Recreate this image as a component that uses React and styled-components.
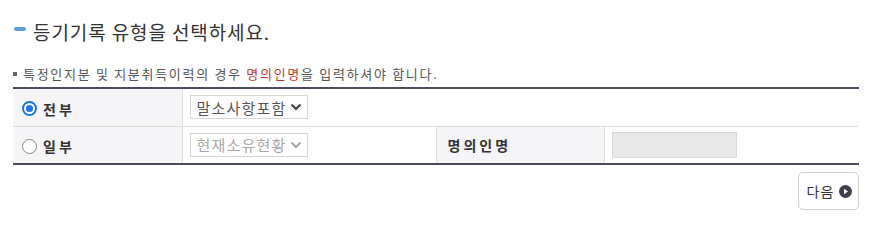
import React from "react";
import styled, { createGlobalStyle } from "styled-components";

const GlobalStyle = createGlobalStyle`
  html, body {
    margin: 0;
    padding: 0;
    background: #fff;
  }
  body {
    font-family: "Noto Sans CJK KR", "Noto Sans", sans-serif;
    color: #333;
  }
`;

const Page = styled.div`
  width: 869px;
  box-sizing: border-box;
  padding: 17px 10px 0 13px;
`;

const Title = styled.h2`
  display: flex;
  align-items: center;
  margin: 0;
  font-size: 19px;
  font-weight: 400;
  letter-spacing: 0.9px;
  line-height: 30px;
  color: #333;
  &::before {
    content: "";
    width: 12px;
    height: 4px;
    border-radius: 2px;
    background: #5b9fd8;
    margin: 0 7px 7px 1px;
  }
`;

const Note = styled.p`
  display: flex;
  align-items: center;
  margin: 18px 0 4px;
  font-size: 13px;
  letter-spacing: 1.7px;
  line-height: 18px;
  color: #555;
  &::before {
    content: "";
    width: 4px;
    height: 4px;
    background: #666;
    margin-right: 6px;
  }
`;

const Em = styled.span`
  color: #c0392b;
`;

const Table = styled.table`
  width: 846px;
  border-collapse: collapse;
  table-layout: fixed;
  border-top: 2px solid #4b4b5c;
  border-bottom: 2px solid #4b4b5c;
`;

const Row = styled.tr`
  height: ${(p) => p.$h}px;
  & + & td,
  & + & th {
    border-top: 1px solid #dcdcdc;
  }
`;

const Head = styled.th`
  background: #f5f5f8;
  text-align: left;
  font-weight: 700;
  font-size: 14px;
  letter-spacing: 3px;
  color: #333;
  padding: 0 0 0 ${(p) => p.$pad || 9}px;
  border-right: 1px solid #dcdcdc;
  border-left: ${(p) => (p.$divider ? "1px solid #dcdcdc" : "none")};
`;

const Cell = styled.td`
  padding: 0 0 0 7px;
`;

const RadioLabel = styled.label`
  display: inline-flex;
  align-items: center;
  gap: 6px;
  cursor: pointer;
`;

const Radio = styled.span`
  width: 15px;
  height: 15px;
  box-sizing: border-box;
  border-radius: 50%;
  border: ${(p) => (p.$on ? "2px solid #1a73e8" : "1.5px solid #858585")};
  background: #fff;
  display: inline-flex;
  align-items: center;
  justify-content: center;
  &::after {
    content: "";
    width: 7px;
    height: 7px;
    border-radius: 50%;
    background: ${(p) => (p.$on ? "#1a73e8" : "transparent")};
  }
`;

const Select = styled.div`
  width: 118px;
  height: 24px;
  box-sizing: border-box;
  border: 1px solid #d6d6d6;
  background: #fff;
  display: flex;
  align-items: center;
  justify-content: space-between;
  padding: 0 5px 0 6px;
  font-size: 15px;
  letter-spacing: 1.2px;
  color: ${(p) => (p.$disabled ? "#a8a8a8" : "#555")};
  svg {
    stroke: ${(p) => (p.$disabled ? "#a8a8a8" : "#444")};
    flex-shrink: 0;
  }
`;

const Input = styled.div`
  width: 125px;
  height: 26px;
  box-sizing: border-box;
  border: 1px solid #d8d8d8;
  background: #e8e8e8;
`;

const Footer = styled.div`
  display: flex;
  justify-content: flex-end;
  padding-top: 7px;
`;

const NextButton = styled.button`
  height: 38px;
  width: 61px;
  box-sizing: border-box;
  border: 1px solid #cfcfcf;
  border-radius: 5px;
  background: #fff;
  display: flex;
  align-items: center;
  justify-content: center;
  gap: 5px;
  font-family: inherit;
  font-size: 14px;
  letter-spacing: 1px;
  color: #333;
  padding: 0 0 0 2px;
`;

const Chevron = () => (
  <svg width="12" height="8" viewBox="0 0 12 8" fill="none" strokeWidth="2.2">
    <path d="M1.5 1.5 L6 6 L10.5 1.5" />
  </svg>
);

const ArrowCircle = () => (
  <svg width="13" height="13" viewBox="0 0 13 13">
    <circle cx="6.5" cy="6.5" r="6.5" fill="#3f3f4a" />
    <path d="M5 3.8 L9 6.5 L5 9.2 Z" fill="#fff" />
  </svg>
);

export default function App() {
  return (
    <>
      <GlobalStyle />
      <Page>
        <Title>등기기록 유형을 선택하세요.</Title>
        <Note>
          특정인지분 및 지분취득이력의 경우&nbsp;<Em>명의인명</Em>을 입력하셔야 합니다.
        </Note>
        <Table>
          <colgroup>
            <col style={{ width: 169 }} />
            <col style={{ width: 254 }} />
            <col style={{ width: 168 }} />
            <col style={{ width: 255 }} />
          </colgroup>
          <tbody>
            <Row $h={38}>
              <Head>
                <RadioLabel>
                  <Radio $on />
                  전부
                </RadioLabel>
              </Head>
              <Cell colSpan={3}>
                <Select>
                  말소사항포함
                  <Chevron />
                </Select>
              </Cell>
            </Row>
            <Row $h={38}>
              <Head>
                <RadioLabel>
                  <Radio />
                  일부
                </RadioLabel>
              </Head>
              <Cell>
                <Select $disabled>
                  현재소유현황
                  <Chevron />
                </Select>
              </Cell>
              <Head $pad={11} $divider>
                명의인명
              </Head>
              <Cell>
                <Input />
              </Cell>
            </Row>
          </tbody>
        </Table>
        <Footer>
          <NextButton>
            다음
            <ArrowCircle />
          </NextButton>
        </Footer>
      </Page>
    </>
  );
}
